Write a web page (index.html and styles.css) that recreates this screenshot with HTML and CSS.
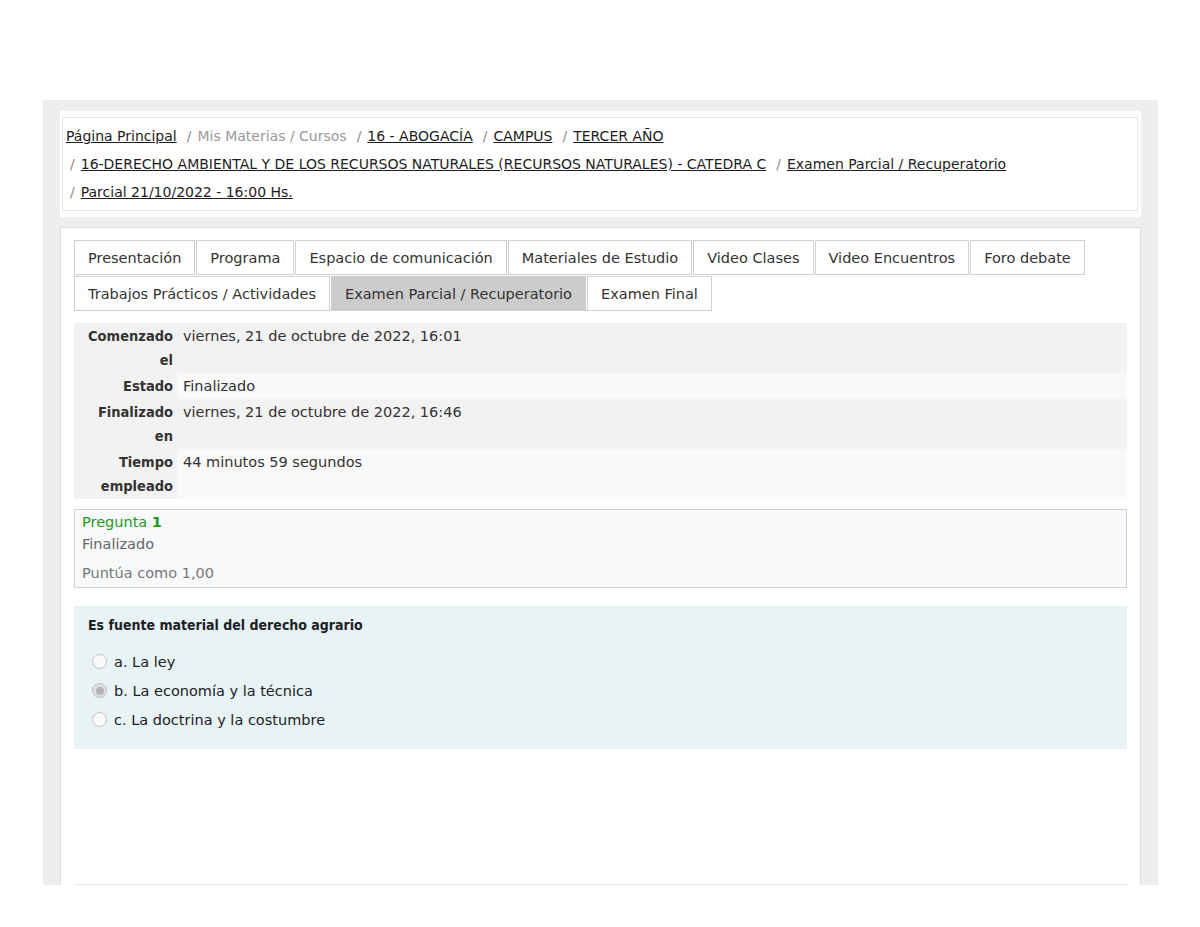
FILE: index.html
```html
<!DOCTYPE html>
<html lang="es">
<head>
<meta charset="utf-8">
<title>Parcial 21/10/2022 - 16:00 Hs.</title>
<link rel="stylesheet" href="styles.css">
</head>
<body>
<div class="page">
  <div class="crumb-card">
    <nav class="crumb-inner">
      <ol class="crumbs">
        <li><a href="#">Página Principal</a></li>
        <li><span class="sep">/</span><span class="muted">Mis Materias / Cursos</span></li>
        <li><span class="sep">/</span><a href="#">16 - ABOGACÍA</a></li>
        <li><span class="sep">/</span><a href="#">CAMPUS</a></li>
        <li><span class="sep">/</span><a href="#">TERCER AÑO</a></li>
        <li><span class="sep">/</span><a href="#">16-DERECHO AMBIENTAL Y DE LOS RECURSOS NATURALES (RECURSOS NATURALES) - CATEDRA C</a></li>
        <li><span class="sep">/</span><a href="#">Examen Parcial / Recuperatorio</a></li>
        <li><span class="sep">/</span><a href="#">Parcial 21/10/2022 - 16:00 Hs.</a></li>
      </ol>
    </nav>
  </div>
  <div class="main-card">
    <ul class="tabs">
      <li class="tab">Presentación</li>
      <li class="tab">Programa</li>
      <li class="tab">Espacio de comunicación</li>
      <li class="tab">Materiales de Estudio</li>
      <li class="tab">Video Clases</li>
      <li class="tab">Video Encuentros</li>
      <li class="tab">Foro debate</li>
      <li class="tab">Trabajos Prácticos / Actividades</li>
      <li class="tab active">Examen Parcial / Recuperatorio</li>
      <li class="tab">Examen Final</li>
    </ul>
    <table class="summary">
      <tr class="odd"><th>Comenzado el</th><td>viernes, 21 de octubre de 2022, 16:01</td></tr>
      <tr class="even"><th>Estado</th><td>Finalizado</td></tr>
      <tr class="odd"><th>Finalizado en</th><td>viernes, 21 de octubre de 2022, 16:46</td></tr>
      <tr class="even"><th>Tiempo empleado</th><td>44 minutos 59 segundos</td></tr>
    </table>
    <div class="qinfo">
      <div class="qno">Pregunta <b>1</b></div>
      <div class="qstate">Finalizado</div>
      <div class="qgrade">Puntúa como 1,00</div>
    </div>
    <div class="formulation">
      <div class="qtext">Es fuente material del derecho agrario</div>
      <div class="answers">
        <div class="opt"><span class="radio"></span><span>a. La ley</span></div>
        <div class="opt"><span class="radio checked"></span><span>b. La economía y la técnica</span></div>
        <div class="opt"><span class="radio"></span><span>c. La doctrina y la costumbre</span></div>
      </div>
    </div>
    <hr class="bottom-rule">
  </div>
</div>
</body>
</html>
```

FILE: styles.css
```css
html, body {
  margin: 0;
  padding: 0;
  background: #ffffff;
}
body {
  font-family: "DejaVu Sans", "Open Sans", sans-serif;
  font-size: 14.5px;
  color: #333333;
}
.page {
  margin: 100px 0 0 43px;
  width: 1115px;
  height: 785px;
  box-sizing: border-box;
  background: #eeeeee;
  padding: 11px 17px 0;
  display: flex;
  flex-direction: column;
}
.crumb-card {
  background: #ffffff;
  padding: 6px 3px 6px 2px;
}
.crumb-inner {
  border: 1px solid #e3e6ea;
  padding: 4px 3px;
}
.crumbs {
  list-style: none;
  margin: 0;
  padding: 0;
  display: flex;
  flex-wrap: wrap;
  line-height: 28px;
  font-size: 14px;
}
.crumbs li {
  white-space: nowrap;
  margin-right: 6px;
}
.crumbs a {
  color: #1d1d1d;
  text-decoration: underline;
}
.sep {
  color: #8a8a8a;
  padding: 0 6px 0 4px;
}
.muted {
  color: #999999;
}
.main-card {
  margin-top: 10px;
  flex: 1;
  background: #ffffff;
  border: 1px solid #dcdcdc;
  border-bottom: none;
  padding: 12px 13px 0;
  display: flex;
  flex-direction: column;
}
.tabs {
  list-style: none;
  margin: 0;
  padding: 0;
  display: flex;
  flex-wrap: wrap;
  gap: 1px;
}
.tab {
  height: 35px;
  box-sizing: border-box;
  border: 1px solid #cfcfcf;
  padding: 0 13px;
  display: flex;
  align-items: center;
  color: #333333;
  background: #ffffff;
}
.tab.active {
  background: #cccccc;
  border-color: #cccccc;
}
.summary {
  margin-top: 12px;
  width: 100%;
  border-collapse: collapse;
  line-height: 24px;
}
.summary th {
  width: 89px;
  text-align: right;
  vertical-align: top;
  font-family: "DejaVu Sans Condensed", "DejaVu Sans", sans-serif;
  font-weight: bold;
  padding: 1px 4px 1px 10px;
  background: #f2f2f2;
  color: #333333;
}
.summary td {
  vertical-align: top;
  padding: 1px 6px;
}
.summary .odd td { background: #f2f2f2; }
.summary .even td { background: #f9f9f9; }
.qinfo {
  margin-top: 10px;
  border: 1px solid #cbd1d8;
  background: #f8f9fa;
  padding: 1px 7px 3px;
  line-height: 22px;
}
.qno {
  color: #1e9a1e;
}
.qstate {
  color: #666666;
}
.qgrade {
  margin-top: 7px;
  color: #777777;
}
.formulation {
  margin-top: 18px;
  background: #e7f3f5;
  padding: 8px 14px 15px;
  color: #1d2125;
}
.qtext {
  font-family: "DejaVu Sans Condensed", "DejaVu Sans", sans-serif;
  font-weight: bold;
  font-size: 14px;
  line-height: 22px;
}
.answers {
  margin-top: 11px;
}
.opt {
  height: 29px;
  display: flex;
  align-items: center;
  gap: 7px;
}
.radio {
  margin-left: 4px;
  width: 15px;
  height: 15px;
  box-sizing: border-box;
  border: 1px solid #c4c4c4;
  border-radius: 50%;
  background: #f9f9f9;
  position: relative;
}
.radio.checked {
  background: #e0e0e0;
  border-color: #bdbdbd;
}
.radio.checked::after {
  content: "";
  position: absolute;
  left: 2.5px;
  top: 2.5px;
  width: 8px;
  height: 8px;
  border-radius: 50%;
  background: #b4b4b4;
}
.bottom-rule {
  margin: auto 0 0;
  border: none;
  border-top: 1px solid #e6e6e6;
  height: 0;
}
```
